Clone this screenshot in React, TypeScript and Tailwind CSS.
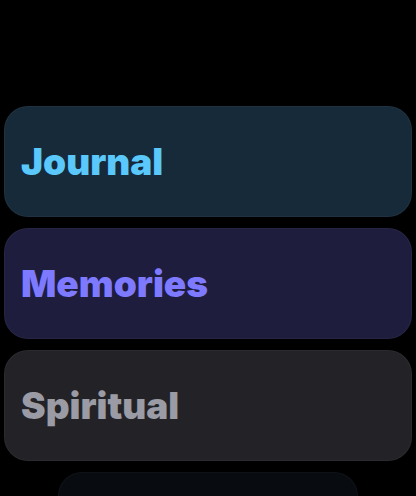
import React from "react";

const items = [
  { label: "Journal", bg: "bg-[#172a3a]", fg: "text-[#5ac8fa]" },
  { label: "Memories", bg: "bg-[#1f1d3d]", fg: "text-[#7d7aff]" },
  { label: "Spiritual", bg: "bg-[#232327]", fg: "text-[#9a9ba5]" },
];

export default function App() {
  return (
    <div
      className="w-[416px] h-[496px] bg-black overflow-hidden flex flex-col items-center pt-[106px] px-[4px] gap-[11px]"
      style={{ fontFamily: "Inter, 'Noto Sans', sans-serif" }}
    >
      {items.map((it) => (
        <div
          key={it.label}
          className={`w-full h-[111px] shrink-0 rounded-[24px] border border-white/[0.04] ${it.bg} flex items-center pl-[16px]`}
        >
          <span className={`text-[37px] font-black leading-none tracking-[0px] ${it.fg}`}>
            {it.label}
          </span>
        </div>
      ))}
      <div className="w-[300px] h-[60px] shrink-0 rounded-[24px] bg-[#080c10] border border-white/[0.03]" />
    </div>
  );
}
